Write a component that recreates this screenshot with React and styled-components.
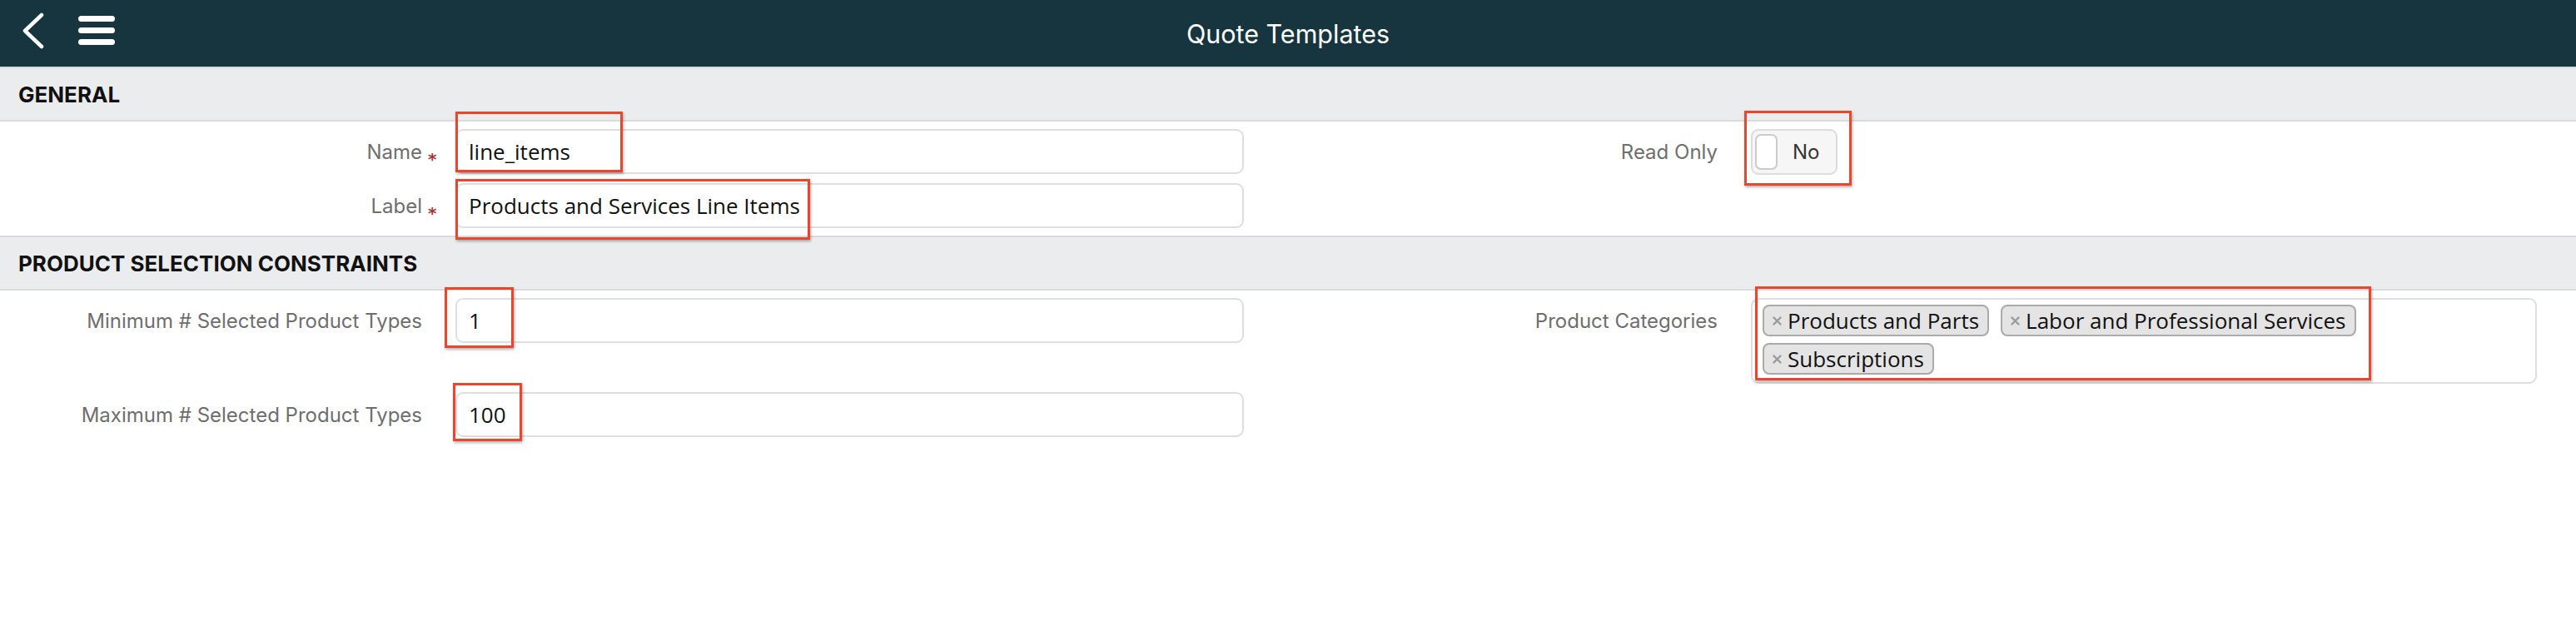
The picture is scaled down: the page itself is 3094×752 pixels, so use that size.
import React from 'react';
import styled, { createGlobalStyle } from 'styled-components';

const GlobalStyle = createGlobalStyle`
  html, body { margin: 0; padding: 0; background: #ffffff; }
  body { font-family: Inter, "Open Sans", sans-serif; }
  *, *::before, *::after { box-sizing: border-box; }
`;

const Page = styled.div`
  position: relative;
  width: 3094px;
  min-height: 752px;
  background: #ffffff;
`;

const TopBar = styled.header`
  display: grid;
  grid-template-columns: 1fr auto 1fr;
  align-items: center;
  height: 80px;
  background: #16353f;
  padding: 0 26px;
`;

const NavGroup = styled.div`
  display: flex;
  align-items: flex-start;
  align-self: stretch;
  padding-top: 15px;
  gap: 40px;
`;

const NavButton = styled.button`
  display: flex;
  border: 0;
  background: none;
  padding: 0;
  margin-top: ${p => p.$drop || 0}px;
  color: #ffffff;
  cursor: pointer;
`;

const Title = styled.h1`
  margin: 0;
  font-family: Inter, sans-serif;
  font-weight: 400;
  font-size: 30.5px;
  color: #ffffff;
`;

const SectionHeader = styled.h2`
  display: flex;
  align-items: center;
  height: 66px;
  margin: 0;
  padding-left: 22px;
  background: #ebecee;
  border-top: 2px solid #dadbdd;
  border-bottom: 2px solid #dadbdd;
  font-family: Inter, sans-serif;
  font-weight: 700;
  font-size: 26px;
  color: #111111;
`;

const SectionBody = styled.div`
  display: grid;
  grid-template-columns: 1fr 1fr;
  row-gap: 10px;
  padding: 9px 0;
`;

const Field = styled.div`
  display: grid;
  grid-template-columns: ${p => p.$labelWidth}px 1fr;
  column-gap: 40px;
  align-items: start;
  padding-right: ${p => p.$inset}px;
`;

const Label = styled.label`
  display: flex;
  align-items: center;
  justify-content: flex-end;
  min-height: 54px;
  font-family: Inter, sans-serif;
  font-size: 24px;
  color: #6e6e6e;
  white-space: nowrap;
`;

const LabelText = styled.span`
  position: relative;
`;

const Required = styled.span`
  position: absolute;
  left: 100%;
  top: 13px;
  margin-left: 7px;
  font-family: "DejaVu Sans", sans-serif;
  font-weight: 700;
  font-size: 20px;
  line-height: 1;
  color: #a3363b;
`;

const TextInput = styled.input`
  display: block;
  width: 100%;
  height: 54px;
  padding: 0 14px;
  border: 2px solid #dedede;
  border-radius: 9px;
  background: #ffffff;
  font-family: "Open Sans", sans-serif;
  font-size: 26px;
  color: #111111;
  outline: none;
`;

const Toggle = styled.div`
  justify-self: start;
  display: inline-flex;
  align-items: center;
  gap: 18px;
  width: 104px;
  height: 55px;
  padding: 0 3px;
  border: 2px solid #dcdcdc;
  border-radius: 9px;
  background: #f6f6f6;
`;

const Knob = styled.span`
  width: 27px;
  height: 43px;
  border: 2px solid #cbcbcb;
  border-radius: 7px;
  background: #ffffff;
`;

const ToggleText = styled.span`
  font-family: Inter, sans-serif;
  font-size: 24px;
  color: #333333;
`;

const MultiSelect = styled.div`
  min-height: 103px;
  padding: 6px 12px 9px;
  border: 2px solid #dedede;
  border-radius: 9px;
  background: #ffffff;
`;

const TagList = styled.div`
  display: flex;
  flex-wrap: wrap;
  gap: 8px 14px;
  max-width: 760px;
`;

const Tag = styled.span`
  display: inline-flex;
  align-items: center;
  gap: 7px;
  height: 38px;
  padding: 0 10px;
  border: 2px solid #aaaaaa;
  border-radius: 8px;
  background: #e4e4e4;
  font-family: "Open Sans", sans-serif;
  font-size: 26px;
  line-height: 1;
  color: #111111;
  white-space: nowrap;
`;

const Annotation = styled.div`
  position: absolute;
  left: ${p => p.$x}px;
  top: ${p => p.$y}px;
  width: ${p => p.$w}px;
  height: ${p => p.$h}px;
  border: 3px solid #e8462d;
  box-shadow: 1px 2px 3px rgba(0, 0, 0, 0.3);
  pointer-events: none;
`;

const Chevron = () => (
  <svg width="28" height="44" viewBox="0 0 28 44" fill="none">
    <polyline points="24,3 4,22 24,41" stroke="#fff" strokeWidth="4.5" strokeLinecap="round" strokeLinejoin="round" />
  </svg>
);

const Hamburger = () => (
  <svg width="44" height="35" viewBox="0 0 44 35">
    <rect x="0" y="0" width="44" height="7" rx="3.5" fill="#fff" />
    <rect x="0" y="14" width="44" height="7" rx="3.5" fill="#fff" />
    <rect x="0" y="28" width="44" height="7" rx="3.5" fill="#fff" />
  </svg>
);

const Cross = () => (
  <svg width="11" height="11" viewBox="0 0 11 11">
    <path d="M1.5 1.5 L9.5 9.5 M9.5 1.5 L1.5 9.5" stroke="#9a9a9a" strokeWidth="2.4" strokeLinecap="round" />
  </svg>
);

const LEFT = { $labelWidth: 507, $inset: 53 };
const RIGHT = { $labelWidth: 516, $inset: 47 };

const FieldLabel = ({ children, required }) => (
  <Label>
    <LabelText>
      {children}
      {required && <Required>*</Required>}
    </LabelText>
  </Label>
);

const categories = ['Products and Parts', 'Labor and Professional Services', 'Subscriptions'];

const annotations = [
  { x: 547, y: 134, w: 201, h: 73 },
  { x: 547, y: 215, w: 426, h: 73 },
  { x: 2095, y: 133, w: 129, h: 90 },
  { x: 534, y: 345, w: 83, h: 73 },
  { x: 544, y: 460, w: 83, h: 70 },
  { x: 2108, y: 344, w: 740, h: 113 },
];

export default function App() {
  return (
    <Page>
      <GlobalStyle />
      <TopBar>
        <NavGroup>
          <NavButton aria-label="Back"><Chevron /></NavButton>
          <NavButton aria-label="Menu" $drop={4}><Hamburger /></NavButton>
        </NavGroup>
        <Title>Quote Templates</Title>
        <div />
      </TopBar>

      <SectionHeader>GENERAL</SectionHeader>
      <SectionBody>
        <Field {...LEFT}>
          <FieldLabel required>Name</FieldLabel>
          <TextInput readOnly value="line_items" />
        </Field>
        <Field {...RIGHT}>
          <FieldLabel>Read Only</FieldLabel>
          <Toggle>
            <Knob />
            <ToggleText>No</ToggleText>
          </Toggle>
        </Field>
        <Field {...LEFT}>
          <FieldLabel required>Label</FieldLabel>
          <TextInput readOnly value="Products and Services Line Items" />
        </Field>
        <div />
      </SectionBody>

      <SectionHeader>PRODUCT SELECTION CONSTRAINTS</SectionHeader>
      <SectionBody>
        <Field {...LEFT}>
          <FieldLabel>Minimum # Selected Product Types</FieldLabel>
          <TextInput readOnly value="1" />
        </Field>
        <Field {...RIGHT}>
          <FieldLabel>Product Categories</FieldLabel>
          <MultiSelect>
            <TagList>
              {categories.map(c => (
                <Tag key={c}><Cross />{c}</Tag>
              ))}
            </TagList>
          </MultiSelect>
        </Field>
        <Field {...LEFT}>
          <FieldLabel>Maximum # Selected Product Types</FieldLabel>
          <TextInput readOnly value="100" />
        </Field>
        <div />
      </SectionBody>

      {annotations.map((a, i) => (
        <Annotation key={i} $x={a.x} $y={a.y} $w={a.w} $h={a.h} />
      ))}
    </Page>
  );
}
